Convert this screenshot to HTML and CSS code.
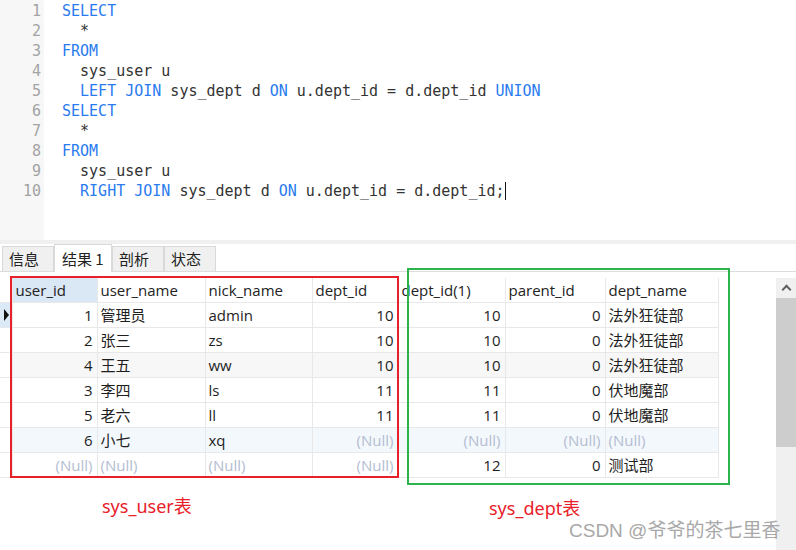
FILE: index.html
```html
<!DOCTYPE html>
<html lang="zh-CN">
<head>
    <meta charset="UTF-8">
    <title>Query</title>
    <link rel="stylesheet" href="styles.css">
</head>
<body>
    <div class="editor">
        <div class="gutter">
            <div>1</div><div>2</div><div>3</div><div>4</div><div>5</div>
            <div>6</div><div>7</div><div>8</div><div>9</div><div>10</div>
        </div>
        <div class="code">
            <div class="line"><span class="kw">SELECT</span></div>
            <div class="line">  *</div>
            <div class="line"><span class="kw">FROM</span></div>
            <div class="line">  sys_user u</div>
            <div class="line">  <span class="kw">LEFT JOIN</span> sys_dept d <span class="kw">ON</span> u.dept_id = d.dept_id <span class="kw">UNION</span></div>
            <div class="line"><span class="kw">SELECT</span></div>
            <div class="line">  *</div>
            <div class="line"><span class="kw">FROM</span></div>
            <div class="line">  sys_user u</div>
            <div class="line">  <span class="kw">RIGHT JOIN</span> sys_dept d <span class="kw">ON</span> u.dept_id = d.dept_id;<span class="caret"></span></div>
        </div>
    </div>
    <div class="splitter"></div>
    <div class="tabs">
        <div class="tab">信息</div>
        <div class="tab active">结果 1</div>
        <div class="tab">剖析</div>
        <div class="tab">状态</div>
    </div>
    <div class="result">
        <div class="grid-wrap">
            <table class="grid">
                <colgroup>
                    <col style="width:12px"><col style="width:85px"><col style="width:108px"><col style="width:107px">
                    <col style="width:86px"><col style="width:107px"><col style="width:100px"><col style="width:113px">
                </colgroup>
                <thead>
                    <tr>
                        <th class="rh"></th>
                        <th class="sel">user_id</th>
                        <th>user_name</th>
                        <th>nick_name</th>
                        <th>dept_id</th>
                        <th>dept_id(1)</th>
                        <th>parent_id</th>
                        <th>dept_name</th>
                    </tr>
                </thead>
                <tbody>
                    <tr class="current">
                        <td class="rh"><span class="pointer"></span></td>
                        <td class="num">1</td><td>管理员</td><td>admin</td><td class="num">10</td>
                        <td class="num">10</td><td class="num">0</td><td>法外狂徒部</td>
                    </tr>
                    <tr>
                        <td class="rh"></td>
                        <td class="num">2</td><td>张三</td><td>zs</td><td class="num">10</td>
                        <td class="num">10</td><td class="num">0</td><td>法外狂徒部</td>
                    </tr>
                    <tr class="alt">
                        <td class="rh"></td>
                        <td class="num">4</td><td>王五</td><td>ww</td><td class="num">10</td>
                        <td class="num">10</td><td class="num">0</td><td>法外狂徒部</td>
                    </tr>
                    <tr>
                        <td class="rh"></td>
                        <td class="num">3</td><td>李四</td><td>ls</td><td class="num">11</td>
                        <td class="num">11</td><td class="num">0</td><td>伏地魔部</td>
                    </tr>
                    <tr>
                        <td class="rh"></td>
                        <td class="num">5</td><td>老六</td><td>ll</td><td class="num">11</td>
                        <td class="num">11</td><td class="num">0</td><td>伏地魔部</td>
                    </tr>
                    <tr class="hover">
                        <td class="rh"></td>
                        <td class="num">6</td><td>小七</td><td>xq</td><td class="num null">(Null)</td>
                        <td class="num null">(Null)</td><td class="num null">(Null)</td><td class="null">(Null)</td>
                    </tr>
                    <tr>
                        <td class="rh"></td>
                        <td class="num null">(Null)</td><td class="null">(Null)</td><td class="null">(Null)</td><td class="num null">(Null)</td>
                        <td class="num">12</td><td class="num">0</td><td>测试部</td>
                    </tr>
                </tbody>
            </table>
        </div>
        <div class="vscroll">
            <div class="arrow"></div>
            <div class="thumb"></div>
        </div>

        <!-- annotations drawn over the grid -->
        <div class="mark mark-user"></div>
        <div class="mark mark-dept"></div>
        <div class="note note-user">sys_user表</div>
        <div class="note note-dept">sys_dept表</div>
        <div class="watermark">CSDN @爷爷的茶七里香</div>
    </div>
</body>
</html>
```

FILE: styles.css
```css
body {
    margin: 0;
    width: 796px;
    height: 550px;
    overflow: hidden;
    background-color: white;
    font-family: "Open Sans", "Noto Sans CJK SC", sans-serif;
    color: #1e1e1e;
}
.editor {
    display: flex;
    height: 240px;
    font-family: "DejaVu Sans Mono", monospace;
    font-size: 15px;
    line-height: 20px;
}
.gutter {
    width: 44px;
    padding-top: 1px;
    padding-right: 3px;
    box-sizing: border-box;
    background-color: #f7f7f7;
    color: #a3a3a3;
    text-align: right;
}
.code {
    padding-top: 1px;
    padding-left: 18px;
    color: #333;
}
.code .line {
    height: 20px;
    white-space: pre;
}
.kw {
    color: #2a7bef;
}
.caret {
    display: inline-block;
    width: 1px;
    height: 18px;
    background-color: #111;
    vertical-align: -4px;
}
.splitter {
    height: 4px;
    background-color: #f0f0f0;
}
.tabs {
    display: flex;
    align-items: flex-end;
    height: 27px;
    padding-left: 2px;
    border-bottom: 1px solid #dcdcdc;
    font-family: "Noto Sans CJK SC", sans-serif;
    font-size: 15px;
}
.tab {
    height: 25px;
    line-height: 24px;
    padding: 0 6px;
    width: 52px;
    box-sizing: border-box;
    background-color: #f0f0f0;
    border: 1px solid #d9d9d9;
    border-bottom: none;
    color: #222;
}
.tab.active {
    height: 28px;
    margin-bottom: -1px;
    width: 58px;
    padding: 0 7px;
    line-height: 28px;
    background-color: white;
}
.result {
    position: relative;
    display: flex;
    height: 278px;
}
.grid-wrap {
    flex: 1;
    padding-top: 6px;
}
.grid {
    table-layout: fixed;
    width: 718px;
    border-collapse: collapse;
    font-size: 15px;
}
.grid th, .grid td {
    height: 24px;
    padding: 0 3px;
    border-right: 1px solid #e8e8e8;
    border-bottom: 1px solid #e8e8e8;
    white-space: nowrap;
    overflow: hidden;
    text-align: left;
    font-weight: normal;
    line-height: 24px;
}
.grid th {
    color: #222;
}
.grid th.sel {
    background-color: #dae8f6;
}
.grid .rh {
    padding: 0;
    position: relative;
}
.grid .num {
    text-align: right;
    padding-right: 4px;
}
.grid .null {
    color: #b3bdd1;
}
.grid tr.current .rh {
    background-color: #dce9f7;
}
.pointer {
    position: absolute;
    left: 4px;
    top: 6px;
    border-left: 5px solid #111;
    border-top: 6px solid transparent;
    border-bottom: 6px solid transparent;
}
.grid tr.alt td {
    background-color: #f7f7f7;
}
.grid tr.alt td.rh, .grid tr.hover td.rh {
    background-color: white;
}
.grid tr.hover td {
    background-color: #f3f8fd;
}
.vscroll {
    width: 20px;
    margin-top: 6px;
    background-color: #f0f0f0;
}
.vscroll .arrow {
    height: 20px;
    position: relative;
}
.vscroll .arrow::before {
    content: "";
    position: absolute;
    left: 7px;
    top: 8px;
    width: 5px;
    height: 5px;
    border-left: 2px solid #606060;
    border-top: 2px solid #606060;
    transform: rotate(45deg);
}
.vscroll .thumb {
    height: 149px;
    background-color: #cdcdcd;
}
.mark {
    position: absolute;
    box-sizing: border-box;
}
.mark-user {
    left: 10px;
    top: 4px;
    width: 389px;
    height: 202px;
    border: 2px solid #e8202a;
}
.mark-dept {
    left: 407px;
    top: -4px;
    width: 323px;
    height: 217px;
    border: 2px solid #2db34c;
}
.note {
    position: absolute;
    font-size: 18px;
    line-height: 24px;
    color: #e8202a;
    font-family: "Noto Sans", "Noto Sans CJK SC", sans-serif;
}
.note-user {
    left: 102px;
    top: 222px;
}
.note-dept {
    left: 489px;
    top: 224px;
}
.watermark {
    position: absolute;
    left: 569px;
    top: 246px;
    font-size: 19px;
    line-height: 26px;
    color: #a8a8a8;
    font-family: "Liberation Sans", "Noto Sans CJK SC", sans-serif;
}
```
